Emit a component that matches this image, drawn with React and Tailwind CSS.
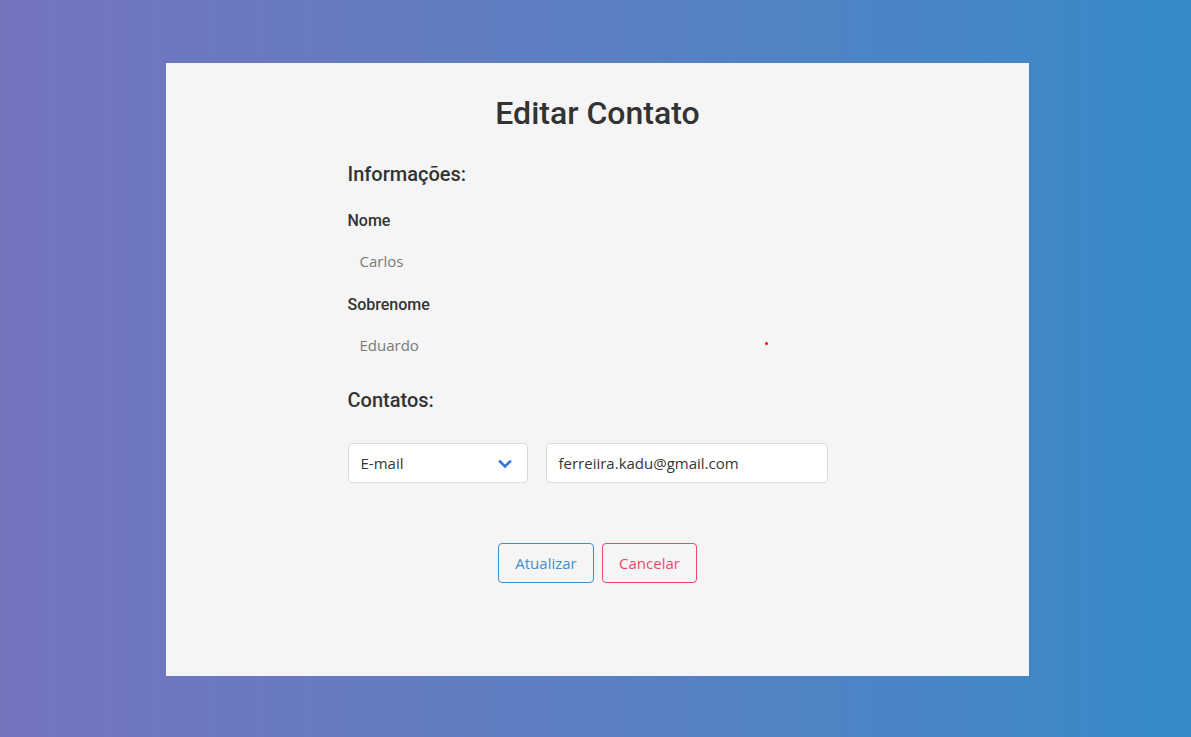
import React from 'react';

const heading = "font-['Roboto',sans-serif]";
const body = "font-['Segoe_UI','Open_Sans','Noto_Sans',sans-serif]";

const Field = ({ label, value }) => (
  <div className="flex flex-col">
    <label className={`${heading} text-[16px] font-medium text-[#333] leading-5`}>{label}</label>
    <div className={`${body} text-[15px] text-[#7a7a7a] px-3 h-10 flex items-center mt-[10px]`}>{value}</div>
  </div>
);

const App = () => {
  return (
    <div className="w-full min-h-[737px] bg-gradient-to-r from-[#7474bf] to-[#348ac7] flex pl-[166px] pt-[63px]">
      <div className="w-[863px] h-[613px] bg-[#f5f5f5] flex flex-col items-center">
        <h1 className={`${heading} text-[32px] font-medium text-[#333] leading-10 mt-[30px]`}>Editar Contato</h1>
        <div className="w-[500px] flex flex-col">
          <h2 className={`${heading} text-[20px] font-medium text-[#333] leading-6 mt-[29px]`}>Informações:</h2>
          <div className="mt-[25px]">
            <Field label="Nome" value="Carlos" />
          </div>
          <div className="mt-[14px] relative">
            <Field label="Sobrenome" value="Eduardo" />
            <span className="absolute left-[417px] top-[47px] w-[3px] h-[3px] rounded-full bg-[#e01010]"></span>
          </div>
          <h2 className={`${heading} text-[20px] font-medium text-[#333] leading-6 mt-[23px]`}>Contatos:</h2>
          <div className="flex gap-[18px] mt-[31px]">
            <div className="w-[180px] h-10 bg-white border border-[#dbdbdb] rounded-[4px] flex items-center justify-between pl-3 pr-[15px]">
              <span className={`${body} text-[15px] text-[#363636]`}>E-mail</span>
              <svg width="14" height="10" viewBox="0 0 14 10" className="mt-[1px]">
                <polyline points="2,2.5 7,7.5 12,2.5" fill="none" stroke="#3273dc" strokeWidth="2.6" strokeLinecap="square" />
              </svg>
            </div>
            <div className="w-[282px] h-10 bg-white border border-[#dbdbdb] rounded-[4px] flex items-center px-3">
              <span className={`${body} text-[15px] text-[#363636]`}>ferreiira.kadu@gmail.com</span>
            </div>
          </div>
        </div>
        <div className="flex gap-2 mt-[60px]">
          <button className={`${body} w-[96px] h-10 border border-[#3e8ed0] rounded-[4px] text-[15px] text-[#3e8ed0]`}>Atualizar</button>
          <button className={`${body} w-[95px] h-10 border border-[#f14668] rounded-[4px] text-[15px] text-[#f14668]`}>Cancelar</button>
        </div>
      </div>
    </div>
  );
};

export default App;
